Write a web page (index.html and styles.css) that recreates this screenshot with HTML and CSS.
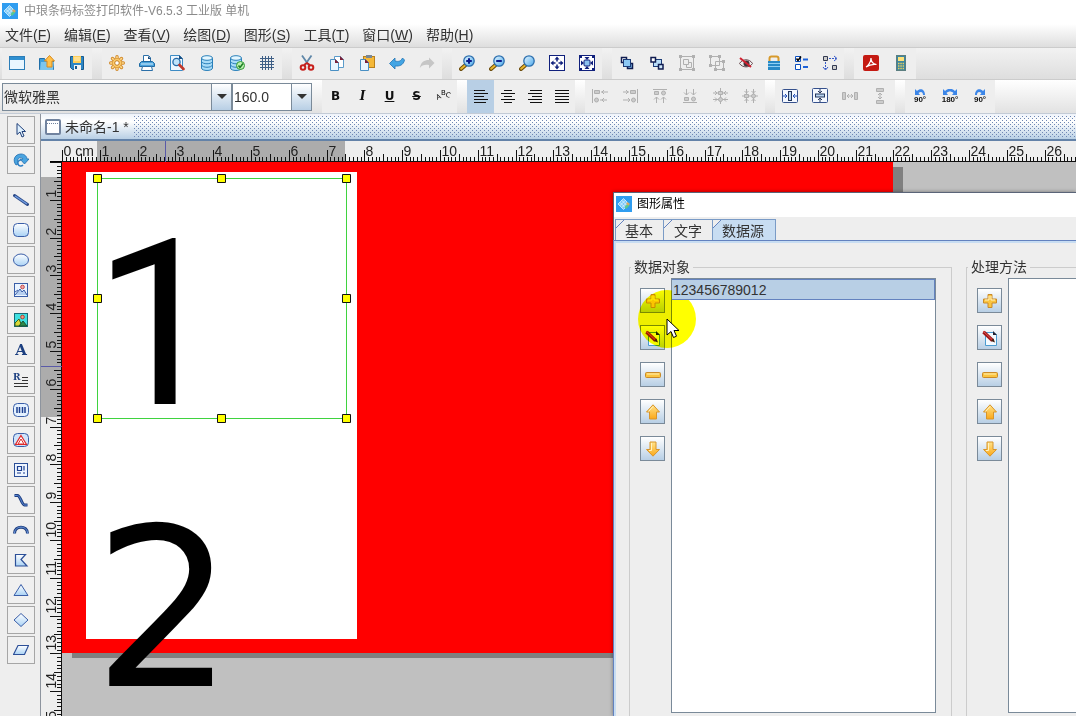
FILE: index.html
```html
<!DOCTYPE html>
<html lang="zh-CN">
<head>
<meta charset="utf-8">
<title>中琅条码标签打印软件</title>
<link rel="stylesheet" href="styles.css">
</head>
<body>
<svg class="defs" aria-hidden="true">
  <defs>
    <linearGradient id="sky" x1="0" y1="0" x2="0" y2="1"><stop offset="0" stop-color="#fff"/><stop offset="1" stop-color="#a9d2f5"/></linearGradient>
    <linearGradient id="gold" x1="0" y1="0" x2="0" y2="1"><stop offset="0" stop-color="#ffe38a"/><stop offset="1" stop-color="#fba818"/></linearGradient>
    <linearGradient id="lens" x1="0" y1="0" x2="1" y2="1"><stop offset="0" stop-color="#e8f7ff"/><stop offset="1" stop-color="#4aa8ec"/></linearGradient>
    <pattern id="dots" width="4" height="4" patternUnits="userSpaceOnUse"><rect width="1" height="1" fill="#6f87b4"/><rect x="2" y="2" width="1" height="1" fill="#6f87b4"/></pattern>
  </defs>
  <symbol id="logo" viewBox="0 0 16 16"><rect width="16" height="16" fill="#2f9df0"/><path d="M7.500 2.500L13 8l-5.500 5.500L2 8z" fill="#7cc8f8"/><path d="M3.800 6.200l5.500 5.500M5.700 4.300l5.500 5.500M3.800 9.800l5.500-5.500M5.700 11.700l5.500-5.500M7.500 2.500L13 8l-5.500 5.500L2 8z" fill="none" stroke="#d8f2ff" stroke-width=".8"/><path d="M8.500 11l3-3 2 1.500L10 13z" fill="#58c890"/><path d="M11.500 6l2.500 2-1.500 1.500L10 8z" fill="#d8a860"/></symbol>
  <symbol id="lens-base" viewBox="0 0 16 16"><path d="M2 14l4-3.500" stroke="#6b4a08" stroke-width="4" stroke-linecap="round"/><path d="M2.200 13.800l3.800-3.300" stroke="#e9b62c" stroke-width="2" stroke-linecap="round"/><circle cx="10" cy="6" r="5.200" fill="url(#lens)" stroke="#2c6fae" stroke-width="1.300"/></symbol>
  <symbol id="plus" viewBox="0 0 16 16"><path d="M6 1.500h4V6h4.500v4H10v4.500H6V10H1.500V6H6z" fill="#fbc540" stroke="#c98a2a"/><path d="M7 3v4H3M9 3v4h4" fill="none" stroke="#fff3c4"/></symbol>
  <symbol id="minus" viewBox="0 0 16 16"><rect x=".5" y="5.500" width="15" height="5" rx="1" fill="#fbc540" stroke="#c98a2a"/><path d="M2 7h12" stroke="#fff0b8"/></symbol>
  <symbol id="up" viewBox="0 0 16 16"><path d="M8 .8L14.500 8H11.500v7h-7V8H1.500z" fill="url(#gold)" stroke="#d8952a"/><path d="M8 2.500L3.500 7.500" stroke="#fff3c4"/></symbol>
  <symbol id="down" viewBox="0 0 16 16"><path d="M8 15.200L14.500 8.500H11V1H5v7.500H1.500z" fill="url(#gold)" stroke="#d8952a"/><path d="M6.500 2v7.500H4" stroke="#fff3c4" fill="none"/></symbol>
  <symbol id="sheet" viewBox="0 0 16 16"><path d="M3.500 2.500H12L14.500 5v10.500h-11z" fill="#f4faff" stroke="#4a9bd0"/><path d="M11 1l4 4h-4z" fill="#223"/></symbol>
</svg>

<div class="app">
  <header class="titlebar"><svg class="ic"><use href="#logo"/></svg><span>中琅条码标签打印软件-V6.5.3 工业版 单机</span></header>

  <nav class="menubar">
    <button>文件(<u>F</u>)</button><button>编辑(<u>E</u>)</button><button>查看(<u>V</u>)</button><button>绘图(<u>D</u>)</button><button>图形(<u>S</u>)</button><button>工具(<u>T</u>)</button><button>窗口(<u>W</u>)</button><button>帮助(<u>H</u>)</button>
  </nav>

  <div class="toolbar">
    <div class="group">
      <button aria-label="新建"><svg class="ic" viewBox="0 0 16 16"><rect x=".5" y="1.500" width="15" height="13" fill="#e9f6ff" stroke="#2b7db8"/><path d="M1 2h14v3H1z" fill="#2f8fd0"/></svg></button>
      <button aria-label="打开"><svg class="ic" viewBox="0 0 16 16"><path d="M.5 3.500h5l1 2h8v9H.5z" fill="#3d9edb" stroke="#1f6ea8"/><path d="M2 7h13l-1 8H1z" fill="#7cc6ee"/><path d="M10.500.5l5 5.500H13v6H8V6H5.500z" fill="#ffc04a" stroke="#d98a1c"/></svg></button>
      <button aria-label="保存"><svg class="ic" viewBox="0 0 16 16"><path d="M1.500 1.500h13v13h-11l-2-2z" fill="#2d86c4" stroke="#175a90"/><rect x="4" y="1" width="8" height="7" fill="#ffcf5a"/><path d="M5 3h6M5 5h6" stroke="#fff3c8"/><rect x="5" y="10" width="7" height="5" fill="#f4f4f4"/><rect x="6" y="11" width="2" height="3" fill="#175a90"/></svg></button>
    </div>
    <div class="group">
      <button aria-label="设置"><svg class="ic" viewBox="0 0 16 16"><path d="M8 1.700v12.600M1.700 8h12.600M3.500 3.500l9 9M12.500 3.500l-9 9" stroke="#d1892a" stroke-width="3.400" stroke-linecap="round"/><path d="M8 1.700v12.600M1.700 8h12.600M3.500 3.500l9 9M12.500 3.500l-9 9" stroke="#ffdc90" stroke-width="1.600" stroke-linecap="round"/><circle cx="8" cy="8" r="4.500" fill="#ffd070" stroke="#e0a040"/><circle cx="8" cy="8" r="2.300" fill="#fff" stroke="#c07a20"/></svg></button>
      <button aria-label="打印"><svg class="ic" viewBox="0 0 16 16"><path d="M4.500 6.500v-6h5l2 2v4" fill="#fff" stroke="#2b6fa8"/><path d="M9 1l3 3H9z" fill="#1c4e80"/><path d="M.5 11.500v-3l2-2h11l2 2v3z" fill="#4aa3dc" stroke="#1f6aa3"/><path d="M2 9h12" stroke="#d7efff"/><path d="M3.500 11.500h9l1 4h-11z" fill="#fff" stroke="#2b6fa8"/></svg></button>
      <button aria-label="打印预览"><svg class="ic" viewBox="0 0 16 16"><path d="M1.500.5h9l3 3v12h-12z" fill="#eef7ff" stroke="#3c8bc4"/><path d="M10 0v4h4z" fill="#1c4e80"/><circle cx="7.500" cy="7" r="3.600" fill="#bfe3fa" stroke="#246aa8" stroke-width="1.300"/><path d="M10.500 10l4 4" stroke="#c0392b" stroke-width="2.600" stroke-linecap="round"/></svg></button>
      <button aria-label="数据库"><svg class="ic" viewBox="0 0 16 16"><path d="M2.500 3v10c0 3.300 11 3.300 11 0V3" fill="#a8dcf8" stroke="#2a80ba"/><path d="M2.500 6.500c1 3 10 3 11 0M2.500 10c1 3 10 3 11 0" fill="none" stroke="#2a80ba"/><ellipse cx="8" cy="3" rx="5.500" ry="2.300" fill="#e3f6ff" stroke="#2a80ba"/></svg></button>
      <button aria-label="数据库校验"><svg class="ic" viewBox="0 0 16 16"><path d="M1.500 3v10c0 3.300 11 3.300 11 0V3" fill="#a8dcf8" stroke="#2a80ba"/><path d="M1.500 6.500c1 3 10 3 11 0M1.500 10c1 3 10 3 11 0" fill="none" stroke="#2a80ba"/><ellipse cx="7" cy="3" rx="5.500" ry="2.300" fill="#e3f6ff" stroke="#2a80ba"/><circle cx="11.500" cy="10.500" r="4" fill="#bdf0b0" stroke="#2f9a35"/><path d="M9.500 10.500l1.500 2 3-4" fill="none" stroke="#1c7d24" stroke-width="1.500"/></svg></button>
      <button aria-label="网格"><svg class="ic" viewBox="0 0 16 16"><path d="M3.500 1v14M6.500 1v14M9.500 1v14M12.500 1v14M1 3.500h14M1 6.500h14M1 9.500h14M1 12.500h14" stroke="#3e5f86"/></svg></button>
    </div>
    <div class="group">
      <button aria-label="剪切"><svg class="ic" viewBox="0 0 16 16"><path d="M3 .5l7 10M12.500.5l-7 10" stroke="#5f87a8" stroke-width="1.800"/><circle cx="4" cy="12.500" r="2.300" fill="none" stroke="#c8201c" stroke-width="2"/><circle cx="12" cy="12.500" r="2.300" fill="none" stroke="#c8201c" stroke-width="2"/><path d="M5 10l3-2 3 2" stroke="#c8201c" stroke-width="1.800" fill="none"/></svg></button>
      <button aria-label="复制"><svg class="ic" viewBox="0 0 16 16"><path d="M5.500 1.500h6l3 3v8h-9z" fill="#fff" stroke="#5c9cca"/><path d="M1.500 4.500h5l3 3v8h-8z" fill="#e8f5ff" stroke="#4a90c4"/><path d="M6 4l4 4H6zM11 1l4 4h-4z" fill="#7c2038"/></svg></button>
      <button aria-label="粘贴"><svg class="ic" viewBox="0 0 16 16"><rect x="4.500" y="1.500" width="11" height="11" fill="#f5b838" stroke="#b9801c"/><rect x="7" y="0" width="6" height="3" fill="#7a8894"/><path d="M1.500 4.500h5l3 3v8h-8z" fill="#e8f5ff" stroke="#4a90c4"/><path d="M6 4l4 4H6z" fill="#7c2038"/></svg></button>
      <button aria-label="撤销"><svg class="ic" viewBox="0 0 16 16"><path d="M.5 8.500L6 3v3c4 1 6 0 7.500-3l2 2c-1 5-5 6.500-9.500 6V14z" fill="#43a5e4" stroke="#2274b4" stroke-width=".8"/></svg></button>
      <button aria-label="重做"><svg class="ic" viewBox="0 0 16 16"><path d="M15.500 8L10 2.500V5C5 5 2 7 .8 13c2-3 5-3.500 9.200-3v3.500z" fill="#c6c6c6"/></svg></button>
    </div>
    <div class="group">
      <button aria-label="放大"><svg class="ic" viewBox="0 0 16 16"><use href="#lens-base"/><path d="M10 3.200v5.600M7.200 6h5.600" stroke="#0a1a8c" stroke-width="2"/></svg></button>
      <button aria-label="缩小"><svg class="ic" viewBox="0 0 16 16"><use href="#lens-base"/><path d="M7.200 6h5.600" stroke="#0a1a8c" stroke-width="2"/></svg></button>
      <button aria-label="原始大小"><svg class="ic" viewBox="0 0 16 16"><use href="#lens-base"/></svg></button>
      <button aria-label="适合窗口"><svg class="ic" viewBox="0 0 16 16"><rect x=".5" y=".5" width="15" height="15" fill="#fff" stroke="#10207c"/><path d="M8 1.500l2.500 3h-5zM8 14.500l2.500-3h-5zM1.500 8l3-2.500v5zM14.500 8l-3-2.500v5z" fill="#10207c"/><path d="M8 4v2.500M8 9.500V12M4 8h2.500M9.500 8H12" stroke="#10207c" stroke-width="1.500"/></svg></button>
      <button aria-label="适合页面"><svg class="ic" viewBox="0 0 16 16"><rect x=".5" y=".5" width="15" height="15" fill="#fff" stroke="#10207c"/><rect x="5" y="5" width="6" height="6" rx="1" fill="#8ec2ee" stroke="#10207c"/><path d="M8 5L5.500 2h5zM8 11l-2.500 3h5zM5 8L2 5.500v5zM11 8l3-2.500v5z" fill="#10207c"/><path d="M1 1h2v2H1zM13 1h2v2h-2zM1 13h2v2H1zM13 13h2v2h-2z" fill="#10207c"/></svg></button>
    </div>
    <div class="group">
      <button aria-label="上移一层"><svg class="ic" viewBox="0 0 16 16"><rect x="2.500" y="2.500" width="5" height="5" fill="#fff" stroke="#101c50" stroke-width="1.500"/><rect x="8.500" y="8.500" width="5" height="5" fill="#7cb8e8" stroke="#101c50" stroke-width="1.500"/><rect x="4.500" y="4.500" width="7" height="7" fill="#8cc8f4" stroke="#1c3c78"/></svg></button>
      <button aria-label="下移一层"><svg class="ic" viewBox="0 0 16 16"><rect x="4.500" y="4.500" width="8" height="7" fill="#b8dcf8" stroke="#1c3c78"/><rect x="2" y="2.500" width="4.500" height="4.500" fill="#fff" stroke="#101c50" stroke-width="1.500"/><rect x="9.500" y="9.500" width="4.500" height="4.500" fill="#cfe8fb" stroke="#101c50" stroke-width="1.500"/></svg></button>
      <button aria-label="组合"><svg class="ic off" viewBox="0 0 16 16"><path d="M1.500 1.500h13v13h-13zM4.500 4.500h5v5h-5z" fill="none" stroke="currentColor"/><path d="M9.500 7.500h3v5h-5v-3" fill="none" stroke="currentColor"/><path d="M0 0h3v3H0zM13 0h3v3h-3zM0 13h3v3H0zM13 13h3v3h-3z" fill="currentColor"/></svg></button>
      <button aria-label="取消组合"><svg class="ic off" viewBox="0 0 16 16"><path d="M1.500 1.500h9v9h-9zM6.500 6.500h8v8h-8z" fill="none" stroke="currentColor"/><path d="M0 0h3v3H0zM9 0h3v3H9zM0 9h3v3H0zM13 5h3v3h-3zM5 13h3v3H5zM13 13h3v3h-3z" fill="currentColor"/></svg></button>
      <button class="slim" aria-label="隐藏"><svg class="ic" viewBox="0 0 16 16"><path d="M1.500 8.500c3-5 10-5 13 0-3 4.500-10 4.500-13 0z" fill="#eee" stroke="#6a4a50"/><circle cx="8.500" cy="8.500" r="3" fill="#40343a"/><path d="M2 3l11 9" stroke="#d02030" stroke-width="2"/></svg></button>
      <button class="slim" aria-label="锁定"><svg class="ic" viewBox="0 0 16 16"><path d="M3.500 7V3.500q0-2 2-2h5q2 0 2 2V7" fill="none" stroke="#d79a2c" stroke-width="2"/><rect x="2" y="6" width="12" height="9" fill="#2789c6"/><path d="M2 8.500h12M2 11.500h12" stroke="#8fd0f4"/></svg></button>
      <button class="slim" aria-label="选择"><svg class="ic" viewBox="0 0 16 16"><path d="M1.500 1.500h5v5h-5zM1.500 9.500h5v5h-5z" fill="#fff" stroke="#0a4fc0"/><path d="M2.500 3.500l1.500 2 3-4" fill="none" stroke="#000" stroke-width="1.500"/><path d="M9 4.500h5M9 12h5" stroke="#1e62d8" stroke-width="2"/></svg></button>
      <button class="slim" aria-label="顺序"><svg class="ic" viewBox="0 0 16 16"><path d="M1.500 1.500h4v4h-4zM10.500 10.500h4v4h-4z" fill="#ccc" stroke="#333a50"/><path d="M7 3.500h7M3.500 7v7" stroke="#3559c8" stroke-dasharray="2 1"/><path d="M12 1l3 2.500L12 6M1 12l2.500 3L6 12" fill="none" stroke="#3559c8"/></svg></button>
    </div>
    <div class="group last">
      <button aria-label="导出PDF"><svg class="ic" viewBox="0 0 16 16"><rect width="16" height="16" rx="2" fill="#c41a12"/><path d="M3 12c2-1 5-5 5-9 0 4 2 6 5.500 6.500C10 9 6 10 3 12z" fill="none" stroke="#fff" stroke-width="1.200"/></svg></button>
      <button aria-label="计算器"><svg class="ic" viewBox="0 0 16 16"><rect x="3.500" y=".5" width="9" height="15" fill="#3d86a0" stroke="#5b7e80"/><rect x="5" y="2" width="6" height="4" fill="#ffe27a"/><path d="M5 8.500h6M5 11h6M5 13.500h6" stroke="#e8cf60" stroke-width="1.500" stroke-dasharray="1.500 .8"/></svg></button>
    </div>
  </div>

  <div class="toolbar format">
    <div class="combos">
      <div class="combo wide"><select aria-label="字体"><option>微软雅黑</option></select><span class="arrow"></span></div>
      <div class="combo"><input type="text" value="160.0" aria-label="字号"><button class="arrow" aria-label="选择字号"></button></div>
    </div>
    <div class="group tight">
      <button class="glyph"><b>B</b></button><button class="glyph"><b><i>I</i></b></button><button class="glyph"><b><u>U</u></b></button><button class="glyph"><b><s>S</s></b></button>
      <button aria-label="弧形文字"><svg class="ic abc" viewBox="0 0 16 16"><text x="0" y="11" transform="rotate(-25 3 9)">A</text><text x="5" y="7">B</text><text x="9" y="9" transform="rotate(20 11 9)">C</text></svg></button>
    </div>
    <div class="group tight">
      <button class="on" aria-label="左对齐"><svg class="ic" viewBox="0 0 16 16"><path d="M1 2.500h11M1 5.500h14M1 8.500h10M1 11.500h14M1 14.500h12" stroke="#111"/></svg></button>
      <button aria-label="居中"><svg class="ic" viewBox="0 0 16 16"><path d="M4 2.500h8M1 5.500h14M4 8.500h8M1 11.500h14M4 14.500h8" stroke="#111"/></svg></button>
      <button aria-label="右对齐"><svg class="ic" viewBox="0 0 16 16"><path d="M3 2.500h12M1 5.500h14M5 8.500h10M1 11.500h14M3 14.500h12" stroke="#111"/></svg></button>
      <button aria-label="两端对齐"><svg class="ic" viewBox="0 0 16 16"><path d="M1 2.500h14M1 5.500h14M1 8.500h14M1 11.500h14M1 14.500h14" stroke="#111"/></svg></button>
    </div>
    <div class="group">
      <button aria-label="图形左对齐"><svg class="ic off" viewBox="0 0 16 16"><path d="M.5 1v14M9 4h7M8 12h7M12 2l-2 2 2 2M12 10l-2 2 2 2" fill="none" stroke="currentColor"/><path d="M2.500 2.500h5v3h-5z" fill="#ccc" stroke="currentColor"/><circle cx="4.500" cy="12" r="2" fill="#ccc" stroke="currentColor"/></svg></button>
      <button aria-label="图形右对齐"><svg class="ic off" viewBox="0 0 16 16"><path d="M15.500 1v14M1 4h6M1 12h7M4 2l2 2-2 2M6 10l2 2-2 2" fill="none" stroke="currentColor"/><path d="M8.500 2.500h5v3h-5z" fill="#ccc" stroke="currentColor"/><circle cx="11.500" cy="12" r="2" fill="#ccc" stroke="currentColor"/></svg></button>
      <button aria-label="图形上对齐"><svg class="ic off" viewBox="0 0 16 16"><path d="M1 1.500h14M4.500 15V9M11.500 15V9M2 11.500L4.500 9 7 11.500M9 11.500L11.500 9l2.500 2.500" fill="none" stroke="currentColor"/><path d="M2.500 3.500h4v3h-4z" fill="#ccc" stroke="currentColor"/><circle cx="11.500" cy="5" r="2" fill="#ccc" stroke="currentColor"/></svg></button>
      <button aria-label="图形下对齐"><svg class="ic off" viewBox="0 0 16 16"><path d="M1 14.500h14M4.500 1v6M11.500 1v6M2 4.500L4.500 7 7 4.500M9 4.500L11.500 7 14 4.500" fill="none" stroke="currentColor"/><path d="M2.500 9.500h4v3h-4z" fill="#ccc" stroke="currentColor"/><circle cx="11.500" cy="11" r="2" fill="#ccc" stroke="currentColor"/></svg></button>
      <button aria-label="垂直居中"><svg class="ic off" viewBox="0 0 16 16"><path d="M8.500 0v16M1 5h15M1 11.500h15M3 3l2 2-2 2M14 3l-2 2 2 2M3 9.500l2 2-2 2M14 9.500l-2 2 2 2" fill="none" stroke="currentColor"/><path d="M6.500 3.500h4v3h-4z" fill="#ccc" stroke="currentColor"/><circle cx="8.500" cy="11.500" r="2" fill="#ccc" stroke="currentColor"/></svg></button>
      <button aria-label="水平居中"><svg class="ic off" viewBox="0 0 16 16"><path d="M0 8h16M4.500 1v14M11.500 1v14M2.500 3l2 2 2-2M9.500 3l2 2 2-2M2.500 13l2-2 2 2M9.500 13l2-2 2 2" fill="none" stroke="currentColor"/><path d="M2.500 6.500h4v3h-4z" fill="#ccc" stroke="currentColor"/><circle cx="11.500" cy="8" r="2" fill="#ccc" stroke="currentColor"/></svg></button>
    </div>
    <div class="group">
      <button aria-label="页面水平居中"><svg class="ic" viewBox="0 0 16 16"><rect x=".5" y="1.500" width="15" height="13" rx="1" fill="#f4f8ff" stroke="#35508c"/><rect x="6.500" y="3.500" width="3" height="9" fill="#b9d4f0" stroke="#24365c"/><path d="M1 8h4M15 8h-4M3 6l2 2-2 2M13 6l-2 2 2 2" fill="none" stroke="#2050b8"/></svg></button>
      <button aria-label="页面垂直居中"><svg class="ic" viewBox="0 0 16 16"><rect x=".5" y=".5" width="15" height="14" rx="1" fill="#f4f8ff" stroke="#35508c"/><rect x="3.500" y="6" width="9" height="3" fill="#b9d4f0" stroke="#24365c"/><path d="M8 1v4M8 14v-4M6 3l2 2 2-2M6 12l2-2 2 2" fill="none" stroke="#24365c"/></svg></button>
      <button aria-label="水平等距"><svg class="ic off" viewBox="0 0 16 16"><path d="M.5 4.500h3v7h-3zM12.500 4.500h3v7h-3z" fill="#ccc" stroke="currentColor"/><path d="M5 8h6M7 6L5 8l2 2M9 6l2 2-2 2" fill="none" stroke="currentColor"/></svg></button>
      <button aria-label="垂直等距"><svg class="ic off" viewBox="0 0 16 16"><path d="M4.500.5h7v3h-7zM4.500 12.500h7v3h-7z" fill="#ccc" stroke="currentColor"/><path d="M8 5v6M6 7l2-2 2 2M6 9l2 2 2-2" fill="none" stroke="currentColor"/></svg></button>
    </div>
    <div class="group">
      <button class="turn"><svg viewBox="0 0 14 6"><path d="M2 0v6h5L5.500 4C8 2 10 3 10 6h2C12 0 7-1 4 2z" fill="#3c86e8"/></svg><span>90°</span></button>
      <button class="turn"><svg viewBox="0 0 14 6"><path d="M0 0v6h5L3.500 4c2-2 5-2 7 0L9 6h5V0l-2 2C9-1 5-1 2 2z" fill="#3c86e8"/></svg><span>180°</span></button>
      <button class="turn"><svg viewBox="0 0 14 6"><path d="M12 0v6H7l1.500-2C6 2 4 3 4 6H2C2 0 7-1 10 2z" fill="#3c86e8"/></svg><span>90°</span></button>
    </div>
  </div>

  <div class="main">
    <aside class="tools">
      <button aria-label="选择"><svg class="ic" viewBox="0 0 16 16"><path d="M4 1.500v11l3-2.500 2 5 2-1-2-4.500h3.500z" fill="#dff1ff" stroke="#1f3f78"/></svg></button>
      <button aria-label="旋转"><svg class="ic" viewBox="0 0 16 16"><path d="M3 13C-1 8 2 2 8 2c4 0 6 3 6 5h2l-4.500 5L7 7h3C8 4 3 6 5 12z" fill="#49a4e0" stroke="#1f6cae" stroke-width=".8"/><path d="M8 8a3 3 0 1 0 2 5" fill="none" stroke="#2f80c4" stroke-width="1.500"/></svg></button>
      <span class="sep"></span>
      <button aria-label="直线"><svg class="ic" viewBox="0 0 16 16"><path d="M1.500 3.500l13 9" stroke="#2c4a88" stroke-width="3" stroke-linecap="round"/><path d="M2 4l12 8" stroke="#6f9be0" stroke-width="1.500"/></svg></button>
      <button aria-label="矩形"><svg class="ic" viewBox="0 0 16 16"><rect x=".5" y="1.500" width="15" height="13" rx="4" fill="url(#sky)" stroke="#3a5ea8"/></svg></button>
      <button aria-label="椭圆"><svg class="ic" viewBox="0 0 16 16"><ellipse cx="8" cy="8" rx="7.500" ry="6" fill="url(#sky)" stroke="#3a5ea8"/></svg></button>
      <button aria-label="图片"><svg class="ic" viewBox="0 0 16 16"><rect x="1.500" y="1.500" width="13" height="13" fill="#eaf4ff" stroke="#3a5ea8"/><circle cx="9.500" cy="5" r="1.800" fill="#f4a8a8" stroke="#c04848"/><path d="M2 13l5-6 2 3 2-2 3 5M2 10l3-2" fill="#b8d0f0" stroke="#3a5ea8"/></svg></button>
      <button aria-label="背景图片"><svg class="ic" viewBox="0 0 16 16"><rect x="1.500" y="1.500" width="13" height="13" fill="#3fe0e0" stroke="#186a78"/><path d="M2 14v-3l4-4 3 7z" fill="#d8d838" stroke="#386020"/><path d="M6 14l4-5 4 5z" fill="#2d8a4a" stroke="#185030"/><circle cx="9.500" cy="5" r="1.800" fill="#f49a88" stroke="#b04030"/></svg></button>
      <button class="letter">A</button>
      <button class="letter rich"><span>R</span><svg viewBox="0 0 16 16" class="ic" aria-hidden="true"><path d="M9 5.500h6M9 8.500h6M1 11.500h14M1 14.500h14" stroke="#333"/></svg></button>
      <button aria-label="条形码"><svg class="ic" viewBox="0 0 16 16"><rect x=".5" y="1.500" width="15" height="13" rx="4" fill="#e4f1ff" stroke="#3a5ea8"/><path d="M4 5v6M6.500 5v6M9.500 5v6M12 5v6" stroke="#1c3f90" stroke-width="1.500"/></svg></button>
      <button aria-label="图形条码"><svg class="ic" viewBox="0 0 16 16"><rect x=".5" y="1.500" width="15" height="13" rx="4" fill="#cfe4fb" stroke="#3a5ea8"/><path d="M8 3.500l5.500 9h-11z" fill="#fff" stroke="#e02828" stroke-width="1.200"/><path d="M8 7l3 5H5z" fill="none" stroke="#e02828"/></svg></button>
      <button aria-label="二维码"><svg class="ic" viewBox="0 0 16 16"><rect x="1.500" y="1.500" width="13" height="13" fill="#eef5ff" stroke="#2c4f98"/><path d="M4.500 4.500h4v4h-4zM11 4v4.500M4 11h4M10 11h2" fill="none" stroke="#1c3f90" stroke-width="1.200"/></svg></button>
      <button aria-label="曲线"><svg class="ic" viewBox="0 0 16 16"><path d="M1.500 3.500h3c3 0 4 9 7 9.500h3" fill="none" stroke="#1f3f80" stroke-width="3"/><path d="M1.500 3.500h3c3 0 4 9 7 9.500h3" fill="none" stroke="#5c8ad8"/></svg></button>
      <button aria-label="圆弧"><svg class="ic" viewBox="0 0 16 16"><path d="M1.500 11.500C1.500 3 14.500 3 14.500 11.500" fill="none" stroke="#1f3f80" stroke-width="3"/><path d="M1.500 11.500C1.500 3 14.500 3 14.500 11.500" fill="none" stroke="#6f9be0"/></svg></button>
      <button aria-label="多边形"><svg class="ic" viewBox="0 0 16 16"><path d="M2.500 2.500h10L8 7.500l6 6.500H2.500z" fill="url(#sky)" stroke="#2c4f98" stroke-width="1.200"/></svg></button>
      <button aria-label="三角形"><svg class="ic" viewBox="0 0 16 16"><path d="M8 2.500l7 11H1z" fill="url(#sky)" stroke="#3a5ea8"/></svg></button>
      <button aria-label="菱形"><svg class="ic" viewBox="0 0 16 16"><path d="M8 1.500L15 8l-7 6.500L1 8z" fill="url(#sky)" stroke="#3a5ea8"/></svg></button>
      <button aria-label="平行四边形"><svg class="ic" viewBox="0 0 16 16"><path d="M5 3.500h10.500l-4 9H.5z" fill="url(#sky)" stroke="#2c4f98" stroke-width="1.200"/></svg></button>
    </aside>

    <section class="doc">
      <div class="doc-tab">
        <svg class="ic" viewBox="0 0 16 16"><rect x="1" y="1" width="14" height="14" rx="1" fill="#fff" stroke="#71839f" stroke-width="2"/><path d="M2 4.500h12" stroke="#71839f" stroke-dasharray="1 1"/></svg>
        <h1>未命名-1 *</h1>
        <svg class="dots" aria-hidden="true"><rect width="100%" height="100%" fill="url(#dots)"/></svg>
      </div>
      <div class="workspace">
        <div class="corner"></div>
        <svg class="ruler" id="ruler-x"></svg>
        <svg class="ruler" id="ruler-y"></svg>
        <div class="canvas">
          <div class="page"></div>
          <div class="label-area"></div>
          <div class="digit first">1</div>
          <div class="digit second">2</div>
          <svg class="selection" viewBox="0 0 258 249"><path d="M4.500 4.500h249v240h-249z" fill="none" stroke="#3fd33f"/><path d="M.5.5h8v8h-8zM124.500.5h8v8h-8zM249.500.5h8v8h-8zM.5 120.500h8v8h-8zM249.500 120.500h8v8h-8zM.5 240.500h8v8h-8zM124.500 240.500h8v8h-8zM249.500 240.500h8v8h-8z" fill="#ff0" stroke="#111"/></svg>
        </div>
      </div>
    </section>
  </div>

  <section class="dialog" role="dialog" aria-labelledby="dialog-title">
    <header><svg class="ic"><use href="#logo"/></svg><h2 id="dialog-title">图形属性</h2></header>
    <div class="tabs"><button>基本</button><button>文字</button><button class="active">数据源</button></div>
    <div class="panel">
      <fieldset class="source">
        <legend>数据对象</legend>
        <div class="cmds">
          <button aria-label="添加"><svg class="ic"><use href="#plus"/></svg></button>
          <button aria-label="编辑"><svg class="ic" viewBox="0 0 16 16"><use href="#sheet"/><path d="M1.500 2l9 8.500" stroke="#a01868" stroke-width="3.600"/><path d="M1 1l9 8.500" stroke="#e050b0"/><path d="M9 11l4 1.500-1.500-4z" fill="#402010"/></svg></button>
          <button aria-label="删除"><svg class="ic"><use href="#minus"/></svg></button>
          <button aria-label="上移"><svg class="ic"><use href="#up"/></svg></button>
          <button aria-label="下移"><svg class="ic"><use href="#down"/></svg></button>
        </div>
        <ul class="list"><li>123456789012</li></ul>
        <span class="halo"></span>
        <svg class="cursor" viewBox="0 0 14 21"><path d="M1 1v16l4-3.500 2.500 6 3-1.300L8 12.500h5z" fill="#fff" stroke="#000"/></svg>
      </fieldset>
      <fieldset class="method">
        <legend>处理方法</legend>
        <div class="cmds">
          <button aria-label="添加"><svg class="ic"><use href="#plus"/></svg></button>
          <button aria-label="编辑"><svg class="ic" viewBox="0 0 16 16"><use href="#sheet"/><path d="M1.500 2l9 8.500" stroke="#a01818" stroke-width="3.600"/><path d="M1 1l9 8.500" stroke="#e05050"/><path d="M9 11l4 1.500-1.500-4z" fill="#402010"/></svg></button>
          <button aria-label="删除"><svg class="ic"><use href="#minus"/></svg></button>
          <button aria-label="上移"><svg class="ic"><use href="#up"/></svg></button>
          <button aria-label="下移"><svg class="ic"><use href="#down"/></svg></button>
        </div>
        <ul class="list"></ul>
      </fieldset>
    </div>
  </section>
</div>
<script src="ruler.js"></script>
</body>
</html>
```

FILE: styles.css
```css
* { box-sizing: border-box; }
body { margin: 0; font-family: "Liberation Sans", "Noto Sans CJK SC", sans-serif; font-size: 14px; color: #333; background: #eee; }
button { font: inherit; color: inherit; padding: 0; border: 0; background: none; display: flex; align-items: center; justify-content: center; }
h1, h2 { margin: 0; font-weight: 400; }
.defs { position: absolute; width: 0; height: 0; }
.ic { width: 16px; height: 16px; flex: none; display: block; }
.off { color: #b0b0b0; }
.app { position: relative; height: 100vh; display: flex; flex-direction: column; overflow: hidden; }

.titlebar { flex: none; height: 24px; display: flex; align-items: center; gap: 6px; padding: 0 2px 2px; background: #fff; color: #8a8a8a; font-size: 12px; line-height: 16px; }
.menubar { flex: none; height: 24px; display: flex; align-items: center; gap: 13px; padding: 0 5px 2px; border-bottom: 1px solid #ccc; background: linear-gradient(#fff, #dedede); line-height: 20px; }
.menubar button { display: block; white-space: nowrap; }

.toolbar { flex: none; height: 32px; display: flex; gap: 10px; padding: 0 2px; border-bottom: 1px solid #ccc; background: linear-gradient(#f2f2f2, #dedede); }
.toolbar.format { height: 34px; background: linear-gradient(#fff, #e2e2e2); border-bottom-color: #c3cbd6; }
.group { display: flex; background: #eee; }
.group button { width: 30px; }
.group .slim { width: 28px; }
.group.last { padding-left: 2px; }
.toolbar .group button { padding-bottom: 1px; }
.group.tight button { width: 27px; }
.group .on { background: #b8cfe5; }
.glyph { font-size: 12px; color: #111; font-family: "DejaVu Sans", sans-serif; }
.glyph i { font-family: "DejaVu Serif", serif; }
.abc { font: 7px "DejaVu Sans", sans-serif; }
.group .turn { flex-direction: column; gap: 1px; font: bold 8px/8px "Liberation Sans", sans-serif; color: #111; }
.turn svg { width: 14px; height: 6px; }

.combos { display: flex; align-items: center; }
.combo { display: grid; grid-template-columns: 1fr 20px; width: 80px; height: 28px; border: 1px solid #7a8a99; background: #fff; }
.combo.wide { width: 230px; background: #eee; }
.combo select, .combo input { grid-area: 1 / 1; width: 100%; min-width: 0; border: 0; background: none; font: inherit; color: #333; padding: 0 0 0 1px; appearance: none; outline: 0; }
.combo select { grid-column: 1 / 3; }
.arrow { grid-area: 1 / 2; display: grid; place-items: center; border-left: 1px solid #7a8a99; background: linear-gradient(#fff, #b8cfe5); pointer-events: none; }
.arrow::after { content: ""; border: 5px solid transparent; border-top-color: #333; border-bottom: 0; }

.main { flex: 1; min-height: 0; display: flex; }
.tools { flex: none; width: 40px; display: flex; flex-direction: column; align-items: center; gap: 2px; padding: 2px 0 0 2px; overflow: hidden; }
.tools button { flex: none; width: 28px; height: 28px; border: 1px solid #a6a6a6; background: #f0f0f0; }
.tools .sep { flex: none; height: 8px; }
.tools .letter { font: bold 17px/20px "DejaVu Serif", serif; font-size: 15px; color: #1c3f80; }
.tools .rich { display: grid; }
.rich > * { grid-area: 1 / 1; }
.rich span { font-size: 9px; line-height: 13px; width: 16px; height: 18px; text-align: left; }

.doc { flex: 1; min-width: 0; display: flex; flex-direction: column; border-left: 1px solid #8d949e; }
.doc-tab { flex: none; height: 27px; display: flex; align-items: center; gap: 4px; padding-left: 4px; border-bottom: 2px solid #6382a8; background: linear-gradient(#eef3fa, #fff 30%, #b8cfe5); }
.doc-tab h1 { font-size: 14px; line-height: 20px; white-space: nowrap; }
.doc-tab .dots { flex: 1; height: 22px; margin-left: 1px; }
.workspace { flex: 1; min-height: 0; display: grid; grid-template: 21px 1fr / 21px 1fr; }
.corner { background: linear-gradient(#000, #000) right bottom / 12px 1px no-repeat #eee; }
.ruler { display: block; width: 100%; height: 100%; background: #eee; overflow: hidden; font: 14px "Liberation Sans", sans-serif; }
.tick { stroke: #111; }
.num { fill: #222; }
.span { fill: #acacac; }
.mark { stroke: #5a5aa8; }

.canvas { position: relative; overflow: hidden; background: #c0c0c0; }
.canvas > * { position: absolute; }
.page { left: 0; top: 0; width: 831px; height: 491px; background: #f00; box-shadow: 10px 5px 0 #808080; }
.label-area { left: 24px; top: 10px; width: 271px; height: 467px; background: #fff; }
.digit { left: 31px; line-height: 312px; color: #000; }
.first { top: 7px; font-family: Roboto, sans-serif; font-size: 232px; }
.second { top: 291px; font-family: "DejaVu Sans", sans-serif; font-size: 222px; }
.selection { left: 31px; top: 12px; width: 258px; height: 249px; overflow: visible; }

.dialog { position: absolute; left: 613px; right: 0; top: 192px; bottom: 0; display: flex; flex-direction: column; border: 1px solid #5a6478; border-width: 1px 0 0 1px; background: #eee; box-shadow: 0 0 4px rgba(0, 0, 0, .4); }
.dialog header { flex: none; height: 24px; display: flex; align-items: center; gap: 5px; padding: 0 2px 2px; background: #fff; }
.dialog h2 { font-size: 12px; line-height: 16px; color: #000; }
.tabs { flex: none; display: flex; padding: 2px 0 0 1px; }
.tabs button { height: 22px; padding: 0 10px 1px; border: 1px solid #7a9bc6; border-width: 1px 1px 0 0; background: linear-gradient(135deg, #eee 5px, #6382bf 5px, #6382bf 6px, #eee 6px); }
.tabs button:first-child { border-left-width: 1px; padding-left: 9px; }
.tabs .active { padding: 0 11px 1px 9px; background: linear-gradient(135deg, #eee 5px, #6382bf 5px, #6382bf 6px, #c8ddf2 6px); }
.panel { flex: 1; min-height: 0; display: flex; gap: 14px; padding-left: 13px; border: solid #c8ddf2; border-width: 2px 0 0 2px; outline: 1px solid #6382bf; }
fieldset { position: relative; display: flex; min-width: 0; margin: 14px 0 0; border: 1px solid #ccc; border-bottom: 0; padding: 1px 15px 3px 10px; }
legend { padding: 0 3px; margin-left: -9px; line-height: 20px; }
.source { width: 323px; }
.method { flex: 1; border-right: 0; padding-right: 0; }
.cmds { flex: none; width: 31px; display: flex; flex-direction: column; gap: 12px; padding-top: 10px; }
.cmds button { width: 25px; height: 25px; border: 1px solid #7a8a99; background: linear-gradient(#fff, #b8cfe5); }
.list { flex: 1; margin: 0; padding: 0; list-style: none; background: #fff; border: 1px solid #7a8a99; }
.method .list { border-right: 0; }
.list li { position: relative; z-index: 2; height: 21px; padding-left: 1px; line-height: 20px; border: 1px solid #6382bf; border-left: 0; background: #b8cfe5; }
.halo { position: absolute; left: 8px; top: 13px; width: 58px; height: 58px; border-radius: 50%; background: #ff0; mix-blend-mode: multiply; }
.cursor { position: absolute; z-index: 3; left: 36px; top: 41px; width: 14px; height: 21px; }
```

FILE: ruler.js
```js
// Rulers at 96 dpi: one centimetre is 96 / 2.54 pixels.
const NS = "http://www.w3.org/2000/svg";
const MM = 96 / 25.4;
const DEPTH = 21;

function add(parent, name, attrs, text) {
  const node = document.createElementNS(NS, name);
  for (const key in attrs) node.setAttribute(key, attrs[key]);
  if (text) node.textContent = text;
  parent.appendChild(node);
}

function drawRuler(svg, vertical, from, to, pointer) {
  const box = svg.getBoundingClientRect();
  // A vertical label sits before its tick, so it can show while the tick is still out of view.
  const extent = vertical ? box.height + 20 : box.width;
  const at = (pos, depth) => (vertical ? [depth, pos] : [pos, depth]);
  const line = (a, b, cls) => add(svg, "line", { x1: a[0], y1: a[1], x2: b[0], y2: b[1], class: cls });
  const [x, y] = at(from, 0);
  add(svg, "rect", { x, y, width: vertical ? DEPTH : to - from, height: vertical ? to - from : DEPTH, class: "span" });
  for (let mm = 0; mm * MM < extent; mm++) {
    const pos = Math.round(mm * MM) + 0.5;
    const length = mm % 10 === 0 ? 12 : mm % 5 === 0 ? 8 : 5;
    line(at(pos, DEPTH - length), at(pos, DEPTH), "tick");
    if (mm % 10) continue;
    const cm = mm / 10;
    if (vertical) {
      if (cm) add(svg, "text", { transform: `translate(15 ${pos - 3}) rotate(-90)`, class: "num" }, String(cm));
    } else {
      add(svg, "text", { x: pos + 1, y: 15, class: "num" }, cm ? String(cm) : "0 cm");
    }
  }
  line(at(0, DEPTH - 0.5), at(extent, DEPTH - 0.5), "tick");
  line(at(pointer, 0), at(pointer, DEPTH), "mark");
}

drawRuler(document.getElementById("ruler-x"), false, 35, 283, 103.5);
drawRuler(document.getElementById("ruler-y"), true, 15, 255, 204.5);
```
